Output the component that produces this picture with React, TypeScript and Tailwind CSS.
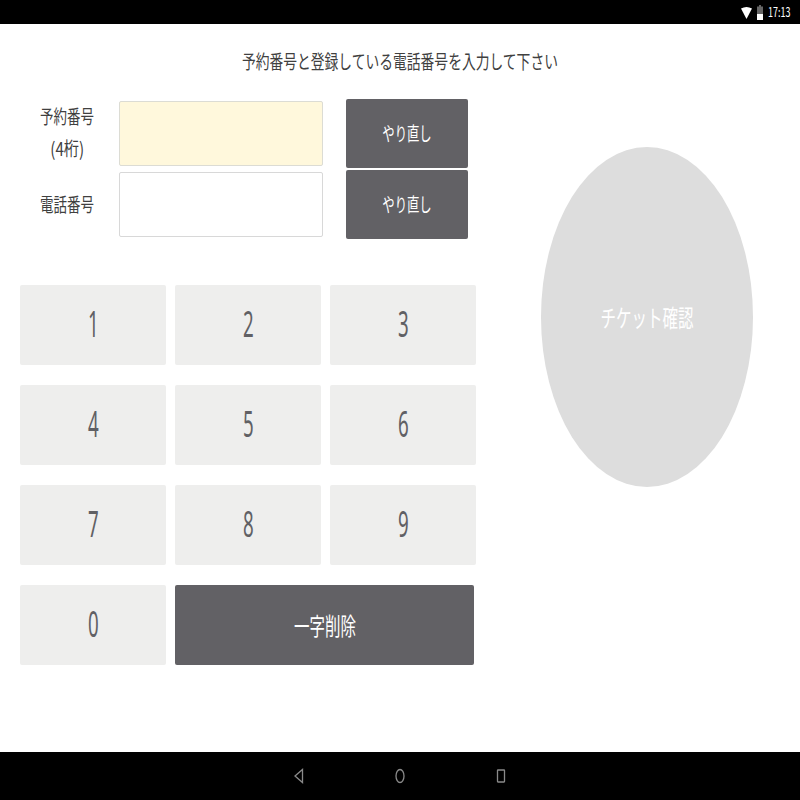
const font = "font-['Noto_Sans_CJK_JP','Noto_Sans',sans-serif]"

function Squeezed({ children, className = 'scale-x-[0.71]' }: { children: React.ReactNode; className?: string }) {
  return <span className={`inline-block origin-center whitespace-nowrap ${className}`}>{children}</span>
}

function Key({ label }: { label: string }) {
  return (
    <button className="flex h-20 items-center justify-center rounded-[2px] bg-[#eeeeed] text-[36px] font-normal text-[#606064]">
      <Squeezed className="-mt-[3px] scale-x-[0.52] font-['Noto_Sans',sans-serif]">{label}</Squeezed>
    </button>
  )
}

function ResetButton() {
  return (
    <button className="flex h-[69px] w-[122px] items-center justify-center rounded-[2px] bg-[#626165] text-[19px] text-white">
      <Squeezed className="scale-x-[0.65]">やり直し</Squeezed>
    </button>
  )
}

export default function App() {
  return (
    <div className={`flex h-[800px] w-[800px] flex-col bg-white ${font}`}>
      <div className="flex h-6 items-center justify-end bg-black pr-[10px]">
        <svg width="11" height="13" viewBox="0 0 11 13" className="mr-[5px]">
          <path d="M0 2.5 Q5.5 -0.5 11 2.5 L5.5 13 Z" fill="#fff" />
        </svg>
        <svg width="6" height="15" viewBox="0 0 6 15" className="mr-[5px]">
          <path d="M2 0h2v1.5h2V15H0V1.5h2z" fill="#666" />
          <path d="M0 9h6v6H0z" fill="#fff" />
        </svg>
        <Squeezed className="-mx-[5px] scale-x-[0.69] text-[13px] text-white">17:13</Squeezed>
      </div>

      <div className="flex-1">
        <h1 className="mt-[23px] h-[28px] text-center text-[19px] leading-[28px] font-normal text-[#404040]">
          <Squeezed className="scale-x-[0.725]">予約番号と登録している電話番号を入力して下さい</Squeezed>
        </h1>

        <div className="flex">
          <div className="w-[541px] shrink-0 pl-5">
            <div className="mt-6 flex">
              <div className="flex w-[99px] shrink-0 flex-col pt-[1px] text-[19px] text-[#404040]">
                <div className="flex h-[71px] flex-col items-center pr-[5px] leading-[32px]">
                  <Squeezed>予約番号</Squeezed>
                  <Squeezed className="scale-x-[0.8]">(4桁)</Squeezed>
                </div>
                <div className="flex h-[71px] items-center justify-center pr-[5px] pb-[5px]">
                  <Squeezed>電話番号</Squeezed>
                </div>
              </div>
              <div className="flex w-[204px] shrink-0 flex-col gap-[6px] pt-[2px]">
                <div className="h-[65px] rounded-[2px] border border-[#dcdcd4] bg-[#fff8dc]" />
                <div className="h-[65px] rounded-[2px] border border-[#d8d8d8] bg-white" />
              </div>
              <div className="ml-[23px] flex flex-col gap-[2px]">
                <ResetButton />
                <ResetButton />
              </div>
            </div>

            <div className="mt-[43px] grid w-[456px] grid-cols-[146px_146px_146px] gap-x-[9px] gap-y-5">
              {['1', '2', '3', '4', '5', '6', '7', '8', '9', '0'].map((n) => (
                <Key key={n} label={n} />
              ))}
              <button className="col-span-2 flex h-20 w-[299px] items-center justify-center rounded-[2px] bg-[#626165] text-[24px] text-white">
                <Squeezed className="scale-x-[0.645]">一字削除</Squeezed>
              </button>
            </div>
          </div>

          <div className="mt-[72px]">
            <button className="flex h-[340px] w-[212px] items-center justify-center rounded-[50%] bg-[#dddddd] text-[24px] text-white">
              <Squeezed className="scale-x-[0.645]">チケット確認</Squeezed>
            </button>
          </div>
        </div>
      </div>

      <div className="flex h-12 items-center bg-black pl-[294px]">
        <svg width="10" height="16" viewBox="0 0 10 16">
          <path d="M8.5 1.5V14.5L1 8Z" fill="none" stroke="#8a8a8a" strokeWidth="1.3" />
        </svg>
        <svg width="10" height="16" viewBox="0 0 10 16" className="ml-[91px]">
          <ellipse cx="5" cy="8" rx="4" ry="6.5" fill="none" stroke="#8a8a8a" strokeWidth="1.3" />
        </svg>
        <svg width="10" height="14" viewBox="0 0 10 14" className="ml-[91px]">
          <rect x="1.5" y="1" width="7" height="12" rx="0.5" fill="none" stroke="#8a8a8a" strokeWidth="1.3" />
        </svg>
      </div>
    </div>
  )
}
